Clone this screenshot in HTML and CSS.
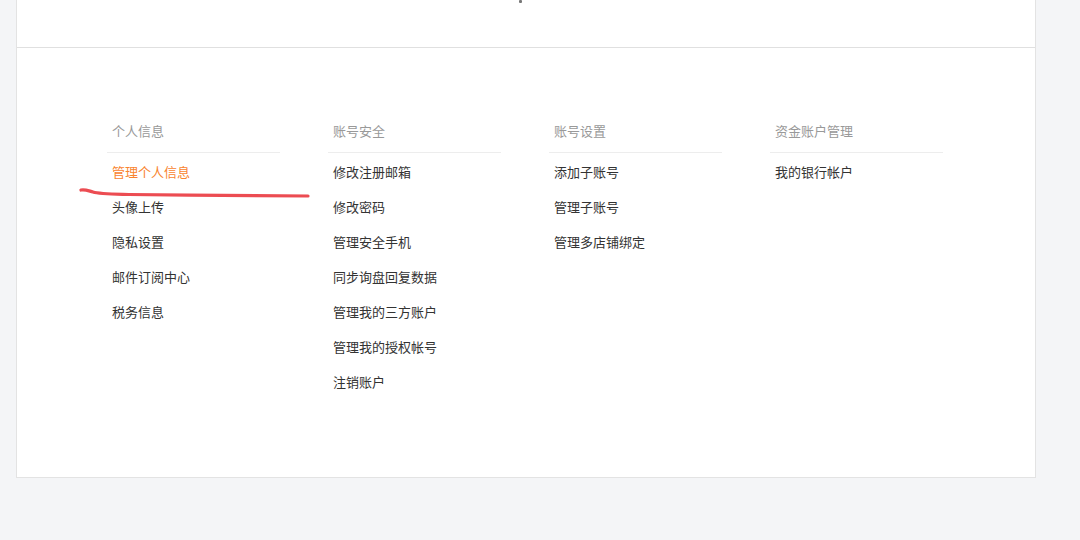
FILE: index.html
```html
<!DOCTYPE html>
<html lang="zh-CN">
<head>
<meta charset="UTF-8">
<title>账号设置</title>
<link rel="stylesheet" href="styles.css">
</head>
<body>
    <div class="panel">
        <div class="panel-top">
            <span class="top-mark"></span>
        </div>
        <div class="panel-body">
            <!-- column 1 -->
            <div class="menu-col">
                <div class="menu-title">个人信息</div>
                <ul class="menu-list">
                    <li class="active">管理个人信息</li>
                    <li>头像上传</li>
                    <li>隐私设置</li>
                    <li>邮件订阅中心</li>
                    <li>税务信息</li>
                </ul>
            </div>
            <!-- column 2 -->
            <div class="menu-col">
                <div class="menu-title">账号安全</div>
                <ul class="menu-list">
                    <li>修改注册邮箱</li>
                    <li>修改密码</li>
                    <li>管理安全手机</li>
                    <li>同步询盘回复数据</li>
                    <li>管理我的三方账户</li>
                    <li>管理我的授权帐号</li>
                    <li>注销账户</li>
                </ul>
            </div>
            <!-- column 3 -->
            <div class="menu-col">
                <div class="menu-title">账号设置</div>
                <ul class="menu-list">
                    <li>添加子账号</li>
                    <li>管理子账号</li>
                    <li>管理多店铺绑定</li>
                </ul>
            </div>
            <!-- column 4 -->
            <div class="menu-col">
                <div class="menu-title">资金账户管理</div>
                <ul class="menu-list">
                    <li>我的银行帐户</li>
                </ul>
            </div>

            <svg class="scribble" width="240" height="20" viewBox="0 0 240 20">
                <path d="M2 5 C 6 4, 10 6, 14 7 C 20 9, 30 9, 50 9.5 C 110 10.5, 180 10.5, 229 11" fill="none" stroke="#ec4c52" stroke-width="3.2" stroke-linecap="round"/>
            </svg>
        </div>
    </div>
</body>
</html>
```

FILE: styles.css
```css
body{
    margin: 0;
    background-color: #f4f5f7;
    font-family: "Noto Sans CJK SC", "Noto Sans", sans-serif;
}
.panel{
    width: 1020px;
    margin-left: 16px;
    background-color: #ffffff;
    border: 1px solid #e3e3e3;
    border-top: 0;
    box-sizing: border-box;
}
.panel-top{
    height: 48px;
    border-bottom: 1px solid #e0e0e0;
    box-sizing: border-box;
    position: relative;
}
.top-mark{
    position: absolute;
    left: 502px;
    top: 0;
    width: 3px;
    height: 3px;
    background-color: #777;
    border-radius: 1px;
}
.panel-body{
    position: relative;
    height: 429px;
    box-sizing: border-box;
    padding: 73px 0 0 90px;
    display: flex;
    gap: 48px;
}
.menu-col{
    width: 173px;
}
.menu-title{
    font-size: 13px;
    line-height: 20px;
    color: #999999;
    padding: 0 0 11px 5px;
    border-bottom: 1px solid #ededed;
}
.menu-list{
    list-style: none;
    margin: 0;
    padding: 1px 0 0 5px;
}
.menu-list li{
    font-size: 13px;
    line-height: 35px;
    color: #333333;
    cursor: pointer;
}
.menu-list li.active{
    color: #f98430;
}
.scribble{
    position: absolute;
    left: 62px;
    top: 137px;
}
```
